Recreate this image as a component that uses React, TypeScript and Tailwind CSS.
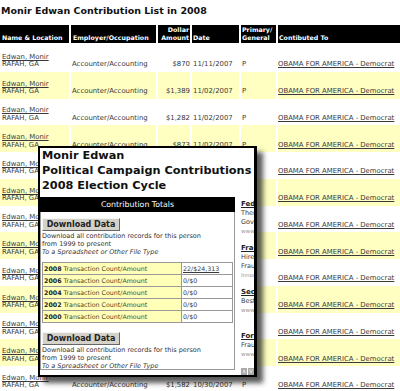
import React from "react";

type Row = { amount: string; date: string };

const rows: Row[] = [
  { amount: "$870", date: "11/11/2007" },
  { amount: "$1,389", date: "11/02/2007" },
  { amount: "$1,282", date: "11/02/2007" },
  { amount: "$873", date: "11/02/2007" },
  { amount: "$1,164", date: "11/02/2007" },
  { amount: "$2,300", date: "11/01/2007" },
  { amount: "$1,275", date: "11/01/2007" },
  { amount: "$2,300", date: "10/31/2007" },
  { amount: "$1,940", date: "10/31/2007" },
  { amount: "$2,300", date: "10/31/2007" },
  { amount: "$1,286", date: "10/30/2007" },
  { amount: "$2,300", date: "10/30/2007" },
  { amount: "$1,582", date: "10/30/2007" },
];

const years = [
  { year: "2008", value: "22/$24,313", link: true },
  { year: "2006", value: "0/$0", link: false },
  { year: "2004", value: "0/$0", link: false },
  { year: "2002", value: "0/$0", link: false },
  { year: "2000", value: "0/$0", link: false },
];

const ads = [
  { title: "Federal Grants", lines: ["There are free", "Government grants"], url: "www.grantsforyou.com" },
  { title: "Fraud Attorneys", lines: ["Hire a lawyer", "Fraud defense"], url: "Innocent until proven" },
  { title: "Securities Law", lines: ["Best advice"], url: "www.securitieslaw.com" },
  { title: "Foreclosure", lines: ["Fraud help"], url: "www.forecloseaid.com" },
];

const cols = "grid grid-cols-[69px_85px_32px_47px_35px_122px] gap-x-[2px]";

function DownloadBlock() {
  return (
    <div className="text-[6.5px] leading-[7.8px]">
      <button
        type="button"
        className="block h-[13px] w-[78px] border border-t-[#f4f4f4] border-l-[#f4f4f4] border-r-[#666] border-b-[#666] bg-[#d4d1c9] text-[8px] font-bold leading-[11px] text-[#222]"
      >
        Download Data
      </button>
      <p className="mt-[2px] text-[#333]">
        Download all contribution records for this person
        <br />
        from 1999 to present
        <br />
        <em>To a Spreadsheet or Other File Type</em>
      </p>
    </div>
  );
}

export default function App() {
  return (
    <div className="relative h-[391px] w-[400px] overflow-hidden bg-white font-['DejaVu_Sans',Verdana,sans-serif] text-[#3a3a3a]">
      <h1 className="h-[25px] pl-[1px] pt-[5px] text-[9.5px] font-bold leading-[12px] text-[#111]">
        Monir Edwan Contribution List in 2008
      </h1>

      <div className={`${cols} mb-[2px] h-[18px] text-[6.3px] font-bold leading-[8px] text-white`}>
        <div className="flex items-end bg-black pb-[1px] pl-[2px]">Name &amp; Location</div>
        <div className="flex items-end bg-black pb-[1px] pl-[2px]">Employer/Occupation</div>
        <div className="flex items-end justify-end bg-black pb-[1px] pr-[1px] text-right">
          Dollar
          <br />
          Amount
        </div>
        <div className="flex items-end bg-black pb-[1px] pl-[1px]">Date</div>
        <div className="flex items-end bg-black pb-[1px] pl-[1px]">
          Primary/
          <br />
          General
        </div>
        <div className="flex items-end bg-black pb-[1px] pl-[1px]">Contibuted To</div>
      </div>

      {rows.map((r, i) => {
        const bg = i % 2 === 1 ? "bg-[#ffffc2]" : "bg-white";
        return (
          <div key={i} className={`${cols} h-[26.75px] text-[6.9px] leading-[7.5px]`}>
            <div className={`${bg} flex flex-col justify-end pb-[3px] pl-[2px]`}>
              <span className="underline">Edwan, Monir</span>
              <span>RAFAH, GA</span>
            </div>
            <div className={`${bg} flex items-end pb-[3px] pl-[1px]`}>Accounter/Accounting</div>
            <div className={`${bg} flex items-end justify-end pb-[3px]`}>{r.amount}</div>
            <div className={`${bg} flex items-end pb-[3px] pl-[1px]`}>{r.date}</div>
            <div className={`${bg} flex items-end pb-[3px] pl-[1px]`}>P</div>
            <div className={`${bg} flex items-end whitespace-nowrap pb-[3px]`}>
              <span className="underline">OBAMA FOR AMERICA - Democrat</span>
            </div>
          </div>
        );
      })}

      {/* popup summary */}
      <div className="absolute left-[38px] top-[146px] flex h-[231px] w-[219px] flex-col overflow-hidden border-2 border-r-[3px] border-black bg-white shadow-[6px_6px_5px_rgba(0,0,0,0.65)]">
        <h2 className="pl-[2px] text-[11.3px] font-bold leading-[15px] text-[#111]">
          Monir Edwan
          <br />
          Political Campaign Contributions
          <br />
          2008 Election Cycle
        </h2>
        <div className="mt-[4px] flex gap-[6px]">
          <div className="w-[195px] shrink-0">
            <div className="h-[15px] bg-black text-center text-[7.8px] leading-[15px] text-white">
              Contribution Totals
            </div>
            <div className="h-[158px] border border-t-0 border-[#999] px-[1px] pt-[6px]">
              <DownloadBlock />
              <table className="mb-[9px] mt-[6px] w-full border-collapse text-[6.3px] leading-[11px]">
                <tbody>
                  {years.map((y) => (
                    <tr key={y.year}>
                      <td className="w-[139px] border border-[#999] bg-[#ffffb8] pl-[1px] text-[#4a4326]">
                        <b className="text-[#222]">{y.year}</b> Transaction Count/Amount
                      </td>
                      <td className="border border-[#999] pl-[1px]">
                        {y.link ? <span className="underline">{y.value}</span> : y.value}
                      </td>
                    </tr>
                  ))}
                </tbody>
              </table>
              <DownloadBlock />
            </div>
          </div>
          <div className="relative w-[40px] shrink-0 whitespace-nowrap pt-[3px] text-[6.5px] leading-[9px]">
            {ads.map((a) => (
              <div key={a.title} className="h-[44px]">
                <div className="text-[7px] font-bold text-[#222] underline">{a.title}</div>
                {a.lines.map((l) => (
                  <div key={l}>{l}</div>
                ))}
                <div className="text-[5.5px] text-[#999]">{a.url}</div>
              </div>
            ))}
            <div className="absolute left-0 top-[171px] flex gap-[1px]">
              <span className="flex h-[7px] w-[6px] items-center justify-center bg-[#aaa] text-[5px] leading-none text-white">
                ∧
              </span>
              <span className="flex h-[7px] w-[6px] items-center justify-center bg-[#aaa] text-[5px] leading-none text-white">
                V
              </span>
            </div>
          </div>
        </div>
      </div>
    </div>
  );
}
